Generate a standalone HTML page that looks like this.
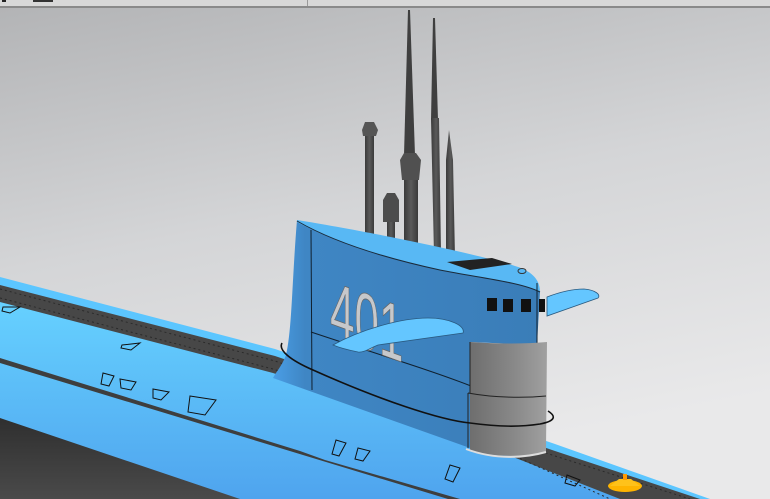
<!DOCTYPE html>
<html><head><meta charset="utf-8"><style>
html,body{margin:0;padding:0;width:770px;height:499px;overflow:hidden}
svg{display:block}
</style></head><body>
<svg width="770" height="499" viewBox="0 0 770 499" xmlns="http://www.w3.org/2000/svg">
<defs>
<linearGradient id="bg" x1="0" y1="0" x2="0.3" y2="1">
<stop offset="0" stop-color="#b2b3b5"/><stop offset="0.5" stop-color="#d4d5d7"/><stop offset="1" stop-color="#e9e9ea"/></linearGradient>
<linearGradient id="hull" x1="0" y1="0" x2="0" y2="1">
<stop offset="0" stop-color="#66d1ff"/><stop offset="1" stop-color="#4fa4ee"/></linearGradient>
<linearGradient id="bot" x1="0" y1="0" x2="0" y2="1">
<stop offset="0" stop-color="#2f2f2f"/><stop offset="1" stop-color="#4a4a4a"/></linearGradient>
<linearGradient id="side" x1="0" y1="0" x2="1" y2="0">
<stop offset="0" stop-color="#4a9ee6"/><stop offset="0.12" stop-color="#3f86c4"/><stop offset="1" stop-color="#3a7db8"/></linearGradient>
<linearGradient id="gray" x1="0" y1="0" x2="1" y2="0">
<stop offset="0" stop-color="#6e6e6e"/><stop offset="0.6" stop-color="#8a8a8a"/><stop offset="1" stop-color="#a0a0a0"/></linearGradient>
<linearGradient id="mast" x1="0" y1="0" x2="1" y2="0">
<stop offset="0" stop-color="#3a3a3a"/><stop offset="0.5" stop-color="#5a5a5a"/><stop offset="1" stop-color="#3a3a3a"/></linearGradient>
</defs>
<rect width="770" height="499" fill="url(#bg)"/>
<rect width="770" height="6" fill="#d8d8d8"/>
<rect y="6" width="770" height="2" fill="#8a8a8a"/>
<rect x="307" y="0" width="1" height="6" fill="#9a9a9a"/>
<rect x="2" y="0" width="4" height="2" fill="#222"/><rect x="33" y="0" width="20" height="2" fill="#333"/>

<polygon points="0,277 275,349 555,444 710,499 0,499" fill="#5cc6ff"/>
<polygon points="0,302 273,373 470,440 620,499 0,499" fill="url(#hull)"/>
<polygon points="0,285 275,356 555,451 700,499 620,499 470,440 273,373 0,302" fill="#474747"/>
<polyline points="0,289 275,361 555,456 690,499" fill="none" stroke="#2a2a2a" stroke-width="1" stroke-dasharray="2,3"/>
<polyline points="0,298 273,369 470,436 610,499" fill="none" stroke="#2a2a2a" stroke-width="1" stroke-dasharray="2,3"/>
<polygon points="0,358 300,451 325,460 460,499 448,499 0,363" fill="#3e3e3e"/>
<polygon points="0,418 240,499 0,499" fill="url(#bot)"/>
<g fill="none" stroke="#111" stroke-width="1">
<polygon points="103,373 114,376 109,386 101,384"/>
<polygon points="120,379 136,382 131,390 121,388"/>
<polygon points="153,389 169,392 161,400 153,398"/>
<polygon points="190,396 216,400 205,415 188,412"/>
<polygon points="122,345 140,343 131,350 121,348"/>
<polygon points="3,307 20,307 10,313 2,311"/>
<polygon points="336,440 346,443 339,456 332,454"/>
<polygon points="358,448 370,451 363,461 355,459"/>
<polygon points="450,465 460,468 453,482 445,479"/>
<polygon points="567,475 580,480 575,486 565,483"/>
</g>
<ellipse cx="625" cy="486" rx="17" ry="6" fill="#ffb400"/>
<polygon points="619,479 631,479 640,486 610,486" fill="#ffc21a"/>
<rect x="623" y="474" width="4" height="6" fill="#ff9900"/>

<polygon points="408,10 410,10 415,155 404,155" fill="#3f3f3f"/>
<polygon points="433,18 435,18 438,120 431,120" fill="#3f3f3f"/>
<rect x="365" y="133" width="9" height="108" fill="url(#mast)"/>
<polygon points="362,130 365,122 374,122 378,130 376,136 363,136" fill="#555"/>
<rect x="387" y="222" width="8" height="25" fill="url(#mast)"/>
<polygon points="383,200 387,193 395,193 399,200 399,222 383,222" fill="#4c4c4c"/>
<ellipse cx="391" cy="245" rx="9" ry="2.5" fill="#2a2a2a"/>
<rect x="404" y="170" width="14" height="82" fill="url(#mast)"/>
<polygon points="400,160 404,153 416,153 421,160 419,180 402,180" fill="#505050"/>
<ellipse cx="411" cy="251" rx="11" ry="3" fill="#2a2a2a"/>
<polygon points="431,118 439,118 441,255 434,255" fill="url(#mast)"/>
<polygon points="449,130 453,160 455,258 446,258 446,160" fill="url(#mast)"/>

<path d="M297,220 C292,280 292,330 286,355 C282,366 276,372 273,378 L470,448 L470,342 L537,345 L540,292 C535,280 525,272 505,268 C430,255 360,236 297,220 Z" fill="url(#side)"/>
<path d="M297,220 C360,230 470,252 515,266 C535,272 540,282 540,292 C520,282 480,278 440,270 C380,257 330,240 297,222 Z" fill="#58b8f4"/>
<path d="M297,221 C330,240 380,257 440,270 C480,278 520,282 540,292" fill="none" stroke="#1a2a3a" stroke-width="1"/>
<polygon points="447,262 492,258 512,264 470,270" fill="#222"/>
<ellipse cx="522" cy="271" rx="4" ry="2.5" fill="none" stroke="#333" stroke-width="1"/>
<line x1="311" y1="230" x2="312" y2="390" stroke="#10202e" stroke-width="1"/>
<line x1="537" y1="283" x2="537" y2="452" stroke="#10202e" stroke-width="1"/>
<path d="M311,332 C380,355 430,370 471,386" fill="none" stroke="#10202e" stroke-width="1"/>
<text x="330" y="336" font-family="Liberation Sans, sans-serif" font-size="80" fill="#c6c8cb" stroke="#666" stroke-width="0.8" transform="translate(330,336) skewY(20) scale(0.55,1) translate(-330,-336)">401</text>
<path d="M470,342 C500,344 525,344 547,342 L546,452 C520,458 490,457 470,450 Z" fill="url(#gray)"/>
<path d="M468,393 C495,398 525,398 546,396" fill="none" stroke="#222" stroke-width="1"/>
<path d="M470,342 L470,393" stroke="#222" stroke-width="1"/>
<path d="M468,393 L468,448" stroke="#222" stroke-width="1"/>
<path d="M466,449 C495,460 525,458 546,452" fill="none" stroke="#ddd" stroke-width="2"/>
<rect x="487" y="298" width="10" height="13" fill="#111"/>
<rect x="503" y="299" width="10" height="13" fill="#111"/>
<rect x="521" y="299" width="10" height="13" fill="#111"/>
<rect x="539" y="299" width="6" height="13" fill="#111"/>
<path d="M333,345 C360,330 400,318 428,318 C450,318 466,326 463,333 L378,345 C370,348 364,353 358,352 C348,350 340,348 333,345 Z" fill="#64c6ff" stroke="#2a5a80" stroke-width="0.8"/>
<path d="M547,297 C560,292 572,289 584,289 C596,290 601,295 598,298 L547,316 Z" fill="#64c6ff" stroke="#2a5a80" stroke-width="0.8"/>
<path d="M282,343 C278,350 290,360 313,370 C380,400 440,420 470,423 C500,427 520,427 540,424 C556,421 556,416 548,411" fill="none" stroke="#111" stroke-width="1.6"/>
</svg>
</body></html>
